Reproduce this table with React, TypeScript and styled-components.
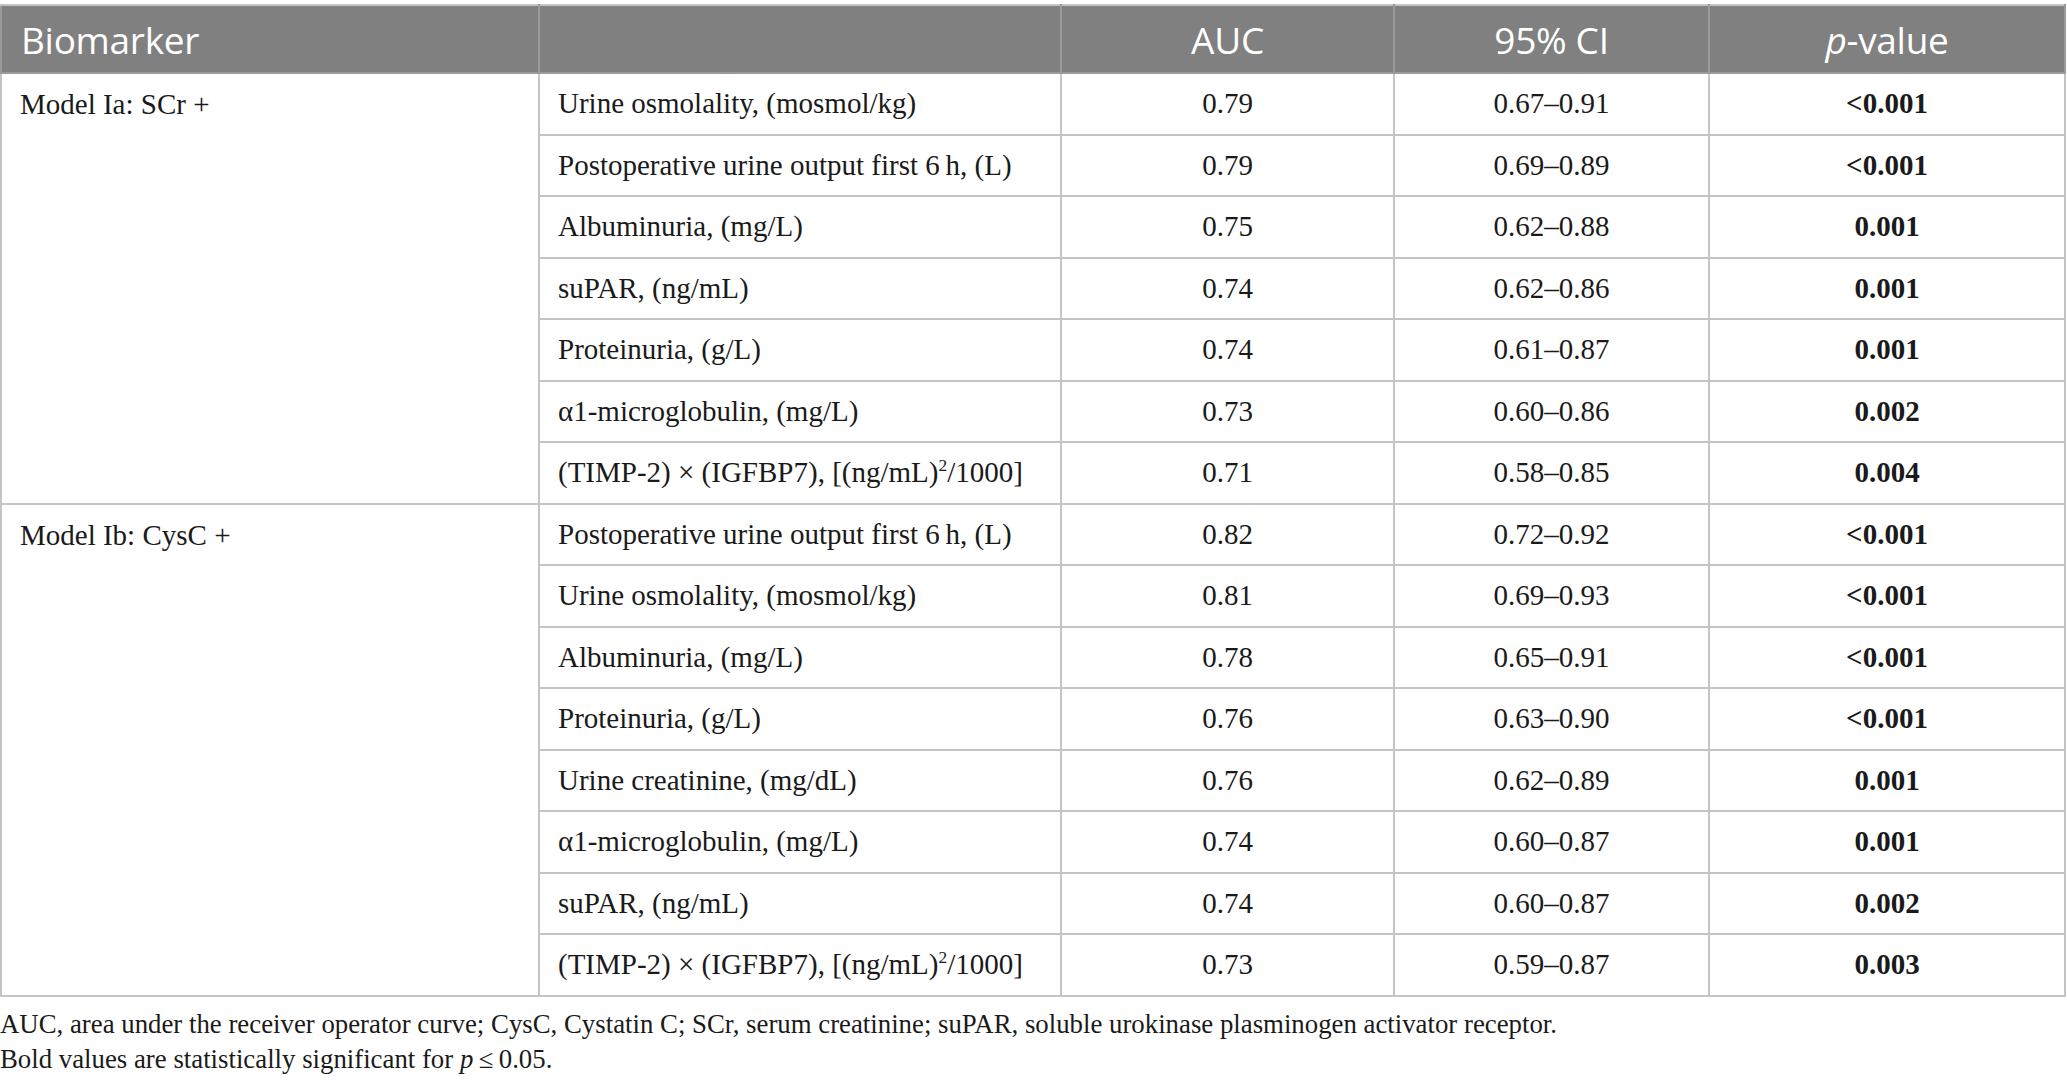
import styled, { createGlobalStyle } from "styled-components";

const GlobalStyle = createGlobalStyle`
  html, body {
    margin: 0;
    padding: 0;
    background: #ffffff;
  }
`;

const Page = styled.div`
  width: 2067px;
  padding-top: 4px;
  font-family: "Liberation Serif", "Times New Roman", serif;
  color: #1a1a1a;
`;

const Table = styled.table`
  width: 2066px;
  border-collapse: collapse;
  table-layout: fixed;
  border: 2px solid #c4c4c4;
`;

const HeadCell = styled.th<{ $align?: string }>`
  height: 68px;
  padding: 0 19px;
  box-sizing: border-box;
  background: #808080;
  color: #ffffff;
  font-family: "Open Sans", "Liberation Sans", sans-serif;
  font-weight: 400;
  font-size: 37px;
  letter-spacing: -0.3px;
  text-align: ${(p) => p.$align || "center"};
  border: 2px solid #9a9a9a;
  border-top-color: #c4c4c4;
`;

const Cell = styled.td<{ $align?: string; $bold?: boolean; $top?: boolean }>`
  height: 61.5px;
  padding: 0 18px;
  box-sizing: border-box;
  font-size: 29px;
  font-weight: ${(p) => (p.$bold ? 700 : 400)};
  text-align: ${(p) => p.$align || "left"};
  vertical-align: ${(p) => (p.$top ? "top" : "middle")};
  padding-top: ${(p) => (p.$top ? "14px" : "0")};
  border: 2px solid #c4c4c4;
  white-space: nowrap;
`;

const Sup = styled.sup`
  font-size: 0.6em;
  line-height: 0;
`;

const Notes = styled.div`
  padding-top: 10px;
  font-size: 26.8px;
  line-height: 35px;
`;

type Row = { name: React.ReactNode; auc: string; ci: string; p: string };

const timp = (
  <>
    (TIMP-2) × (IGFBP7), [(ng/mL)<Sup>2</Sup>/1000]
  </>
);

const groups: { label: string; rows: Row[] }[] = [
  {
    label: "Model Ia: SCr +",
    rows: [
      { name: "Urine osmolality, (mosmol/kg)", auc: "0.79", ci: "0.67–0.91", p: "<0.001" },
      { name: "Postoperative urine output first 6\u2009h, (L)", auc: "0.79", ci: "0.69–0.89", p: "<0.001" },
      { name: "Albuminuria, (mg/L)", auc: "0.75", ci: "0.62–0.88", p: "0.001" },
      { name: "suPAR, (ng/mL)", auc: "0.74", ci: "0.62–0.86", p: "0.001" },
      { name: "Proteinuria, (g/L)", auc: "0.74", ci: "0.61–0.87", p: "0.001" },
      { name: "α1-microglobulin, (mg/L)", auc: "0.73", ci: "0.60–0.86", p: "0.002" },
      { name: timp, auc: "0.71", ci: "0.58–0.85", p: "0.004" },
    ],
  },
  {
    label: "Model Ib: CysC +",
    rows: [
      { name: "Postoperative urine output first 6\u2009h, (L)", auc: "0.82", ci: "0.72–0.92", p: "<0.001" },
      { name: "Urine osmolality, (mosmol/kg)", auc: "0.81", ci: "0.69–0.93", p: "<0.001" },
      { name: "Albuminuria, (mg/L)", auc: "0.78", ci: "0.65–0.91", p: "<0.001" },
      { name: "Proteinuria, (g/L)", auc: "0.76", ci: "0.63–0.90", p: "<0.001" },
      { name: "Urine creatinine, (mg/dL)", auc: "0.76", ci: "0.62–0.89", p: "0.001" },
      { name: "α1-microglobulin, (mg/L)", auc: "0.74", ci: "0.60–0.87", p: "0.001" },
      { name: "suPAR, (ng/mL)", auc: "0.74", ci: "0.60–0.87", p: "0.002" },
      { name: timp, auc: "0.73", ci: "0.59–0.87", p: "0.003" },
    ],
  },
];

const App = () => {
  return (
    <Page>
      <GlobalStyle />
      <Table>
        <colgroup>
          <col style={{ width: 538 }} />
          <col style={{ width: 522 }} />
          <col style={{ width: 333 }} />
          <col style={{ width: 315 }} />
          <col />
        </colgroup>
        <thead>
          <tr>
            <HeadCell $align="left">Biomarker</HeadCell>
            <HeadCell />
            <HeadCell>AUC</HeadCell>
            <HeadCell>95% CI</HeadCell>
            <HeadCell>
              <i>p</i>-value
            </HeadCell>
          </tr>
        </thead>
        <tbody>
          {groups.map((g) =>
            g.rows.map((r, i) => (
              <tr key={g.label + i}>
                {i === 0 && (
                  <Cell $top rowSpan={g.rows.length}>
                    {g.label}
                  </Cell>
                )}
                <Cell>{r.name}</Cell>
                <Cell $align="center">{r.auc}</Cell>
                <Cell $align="center">{r.ci}</Cell>
                <Cell $align="center" $bold>
                  {r.p}
                </Cell>
              </tr>
            ))
          )}
        </tbody>
      </Table>
      <Notes>
        AUC, area under the receiver operator curve; CysC, Cystatin C; SCr, serum creatinine; suPAR, soluble urokinase
        plasminogen activator receptor.
        <br />
        Bold values are statistically significant for <i>p</i>
        {"\u2009≤\u2009"}0.05.
      </Notes>
    </Page>
  );
};

export default App;
